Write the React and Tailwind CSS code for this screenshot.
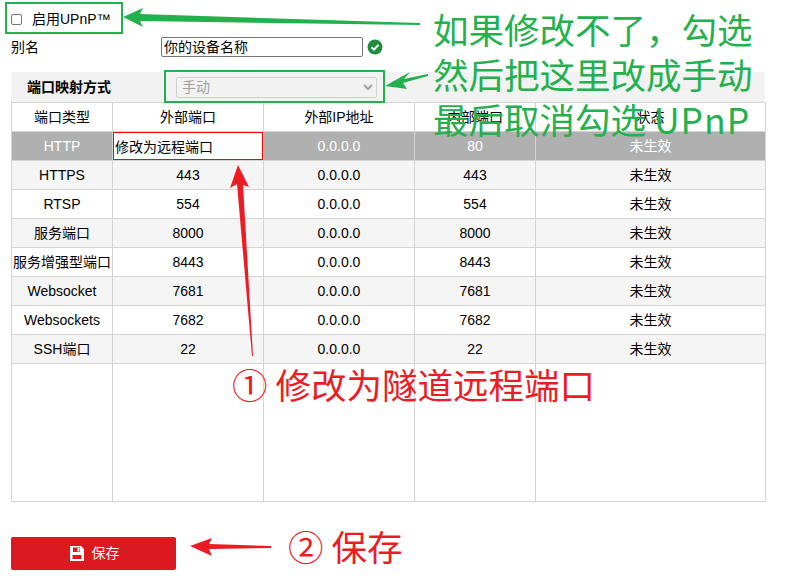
import React from 'react';

const rows = [
    ['HTTP', '', '0.0.0.0', '80', '未生效'],
    ['HTTPS', '443', '0.0.0.0', '443', '未生效'],
    ['RTSP', '554', '0.0.0.0', '554', '未生效'],
    ['服务端口', '8000', '0.0.0.0', '8000', '未生效'],
    ['服务增强型端口', '8443', '0.0.0.0', '8443', '未生效'],
    ['Websocket', '7681', '0.0.0.0', '7681', '未生效'],
    ['Websockets', '7682', '0.0.0.0', '7682', '未生效'],
    ['SSH端口', '22', '0.0.0.0', '22', '未生效'],
];

const headers = ['端口类型', '外部端口', '外部IP地址', '内部端口', '状态'];

// Flechas dibujadas encima de la captura
function Arrows() {
    return (
        <svg className="absolute left-0 top-0 pointer-events-none" width="792" height="588" viewBox="0 0 792 588">
            <path d="M123 17 L143 8 L140 14 L420 23 L420 25 L140 21 L143 27 Z" fill="#22b14c" />
            <path d="M385 86 L410 72 L404 79 L428 74 L428 76 L403 83 L407 89 Z" fill="#22b14c" />
            <path d="M238 165 L249 187 L243 185 L253 356 L252 356 L237 184 L230 188 Z" fill="#ed1c24" />
            <path d="M190 546 L212 538 L209 544 L271 546 L271 548 L209 549 L212 556 Z" fill="#ed1c24" />
        </svg>
    );
}

export default function App() {
    return (
        <div className="relative w-[792px] h-[588px] overflow-hidden bg-white text-[14px] text-black font-['Liberation_Sans','Noto_Sans_CJK_SC',sans-serif]">
            <div className="pl-[11px] pt-[5px]">
                <label className="flex items-center h-[28px] gap-[10px]">
                    <input type="checkbox" className="w-[11px] h-[11px] m-0 appearance-none border border-[#767676] rounded-[2px] bg-white" />
                    <span>启用UPnP™</span>
                </label>

                <div className="flex items-center h-[20px] mt-[4px]">
                    <span className="w-[150px]">别名</span>
                    <input
                        readOnly
                        value="你的设备名称"
                        className="w-[202px] h-[20px] px-[2px] border border-[#767676] rounded-[2px] text-[14px] text-black outline-none"
                    />
                    <svg className="ml-[4px]" width="16" height="16" viewBox="0 0 16 16">
                        <circle cx="8" cy="8" r="7.5" fill="#1e8e3e" />
                        <path d="M4.5 8.2 L7 10.6 L11.6 5.8" fill="none" stroke="#fff" strokeWidth="2" />
                    </svg>
                </div>

                <div className="w-[754px] h-[30px] mt-[15px] flex items-center bg-[#f2f2f2]">
                    <span className="w-[165px] pl-[16px] font-bold">端口映射方式</span>
                    <select disabled className="w-[201px] h-[21px] pl-[1px] border border-[#d0d0d0] rounded-[2px] bg-[#f2f2f2] text-[14px] text-[#a0a0a0] opacity-100">
                        <option>手动</option>
                    </select>
                </div>

                <table className="w-[754px] h-[400px] table-fixed border-collapse text-center">
                    <colgroup>
                        <col className="w-[101px]" />
                        <col className="w-[151px]" />
                        <col className="w-[151px]" />
                        <col className="w-[121px]" />
                        <col className="w-[230px]" />
                    </colgroup>
                    <thead>
                        <tr className="h-[29px]">
                            {headers.map((h) => (
                                <th key={h} className="border border-[#d4d4d4] font-normal p-0">{h}</th>
                            ))}
                        </tr>
                    </thead>
                    <tbody>
                        {rows.map((row, i) => (
                            <tr
                                key={row[0]}
                                className={`h-[29px] ${i === 0 ? 'bg-[#b0b0b0] text-white' : i % 2 === 1 ? 'bg-[#f5f5f5]' : 'bg-white'}`}
                            >
                                {row.map((cell, j) => (
                                    <td key={j} className="border border-[#d4d4d4] p-0 whitespace-nowrap">
                                        {i === 0 && j === 1 ? (
                                            <input
                                                readOnly
                                                value="修改为远程端口"
                                                className="block w-full h-[28px] px-[1px] border border-[#ff0000] bg-white text-[14px] text-black outline-none"
                                            />
                                        ) : cell}
                                    </td>
                                ))}
                            </tr>
                        ))}
                        <tr>
                            {headers.map((h) => (
                                <td key={h} className="border border-[#d4d4d4] p-0" />
                            ))}
                        </tr>
                    </tbody>
                </table>

                <button className="flex items-center justify-center gap-[8px] w-[165px] h-[33px] pl-[2px] mt-[35px] rounded-[2px] bg-[#da1a20] text-white text-[14px]">
                    <svg width="14" height="15" viewBox="0 0 14 15">
                        <path fillRule="evenodd" d="M0 0 H11 L14 3 V15 H0 Z M3 1.5 V6 H10 V1.5 Z M7.5 2 H9.5 V5.5 H7.5 Z M2.5 9 V13 H11.5 V9 Z" fill="#fff" />
                    </svg>
                    <span>保存</span>
                </button>
            </div>

            {/* Anotaciones encima de la captura */}
            <div className="absolute left-[5px] top-[2px] w-[118px] h-[32px] border-[2px] border-[#22b14c]" />
            <div className="absolute left-[164px] top-[70px] w-[221px] h-[33px] border-[2px] border-[#22b14c]" />
            <div className="absolute left-[433px] top-[6px] text-[35.5px] leading-[45px] font-normal text-[#22b14c] whitespace-nowrap font-['Noto_Sans_CJK_SC',sans-serif]">
                <div>如果修改不了，勾选</div>
                <div>然后把这里改成手动</div>
                <div>最后取消勾选 <span className="tracking-[1px]">UPnP</span></div>
            </div>
            <div className="absolute left-[232px] top-[361px] text-[35.5px] leading-[45px] font-normal text-[#ed1c24] whitespace-nowrap font-['Noto_Sans_CJK_SC',sans-serif]">
                ① 修改为隧道远程端口
            </div>
            <div className="absolute left-[288px] top-[523px] text-[35.5px] leading-[45px] font-normal text-[#ed1c24] whitespace-nowrap font-['Noto_Sans_CJK_SC',sans-serif]">
                ② 保存
            </div>
            <Arrows />
        </div>
    );
}
